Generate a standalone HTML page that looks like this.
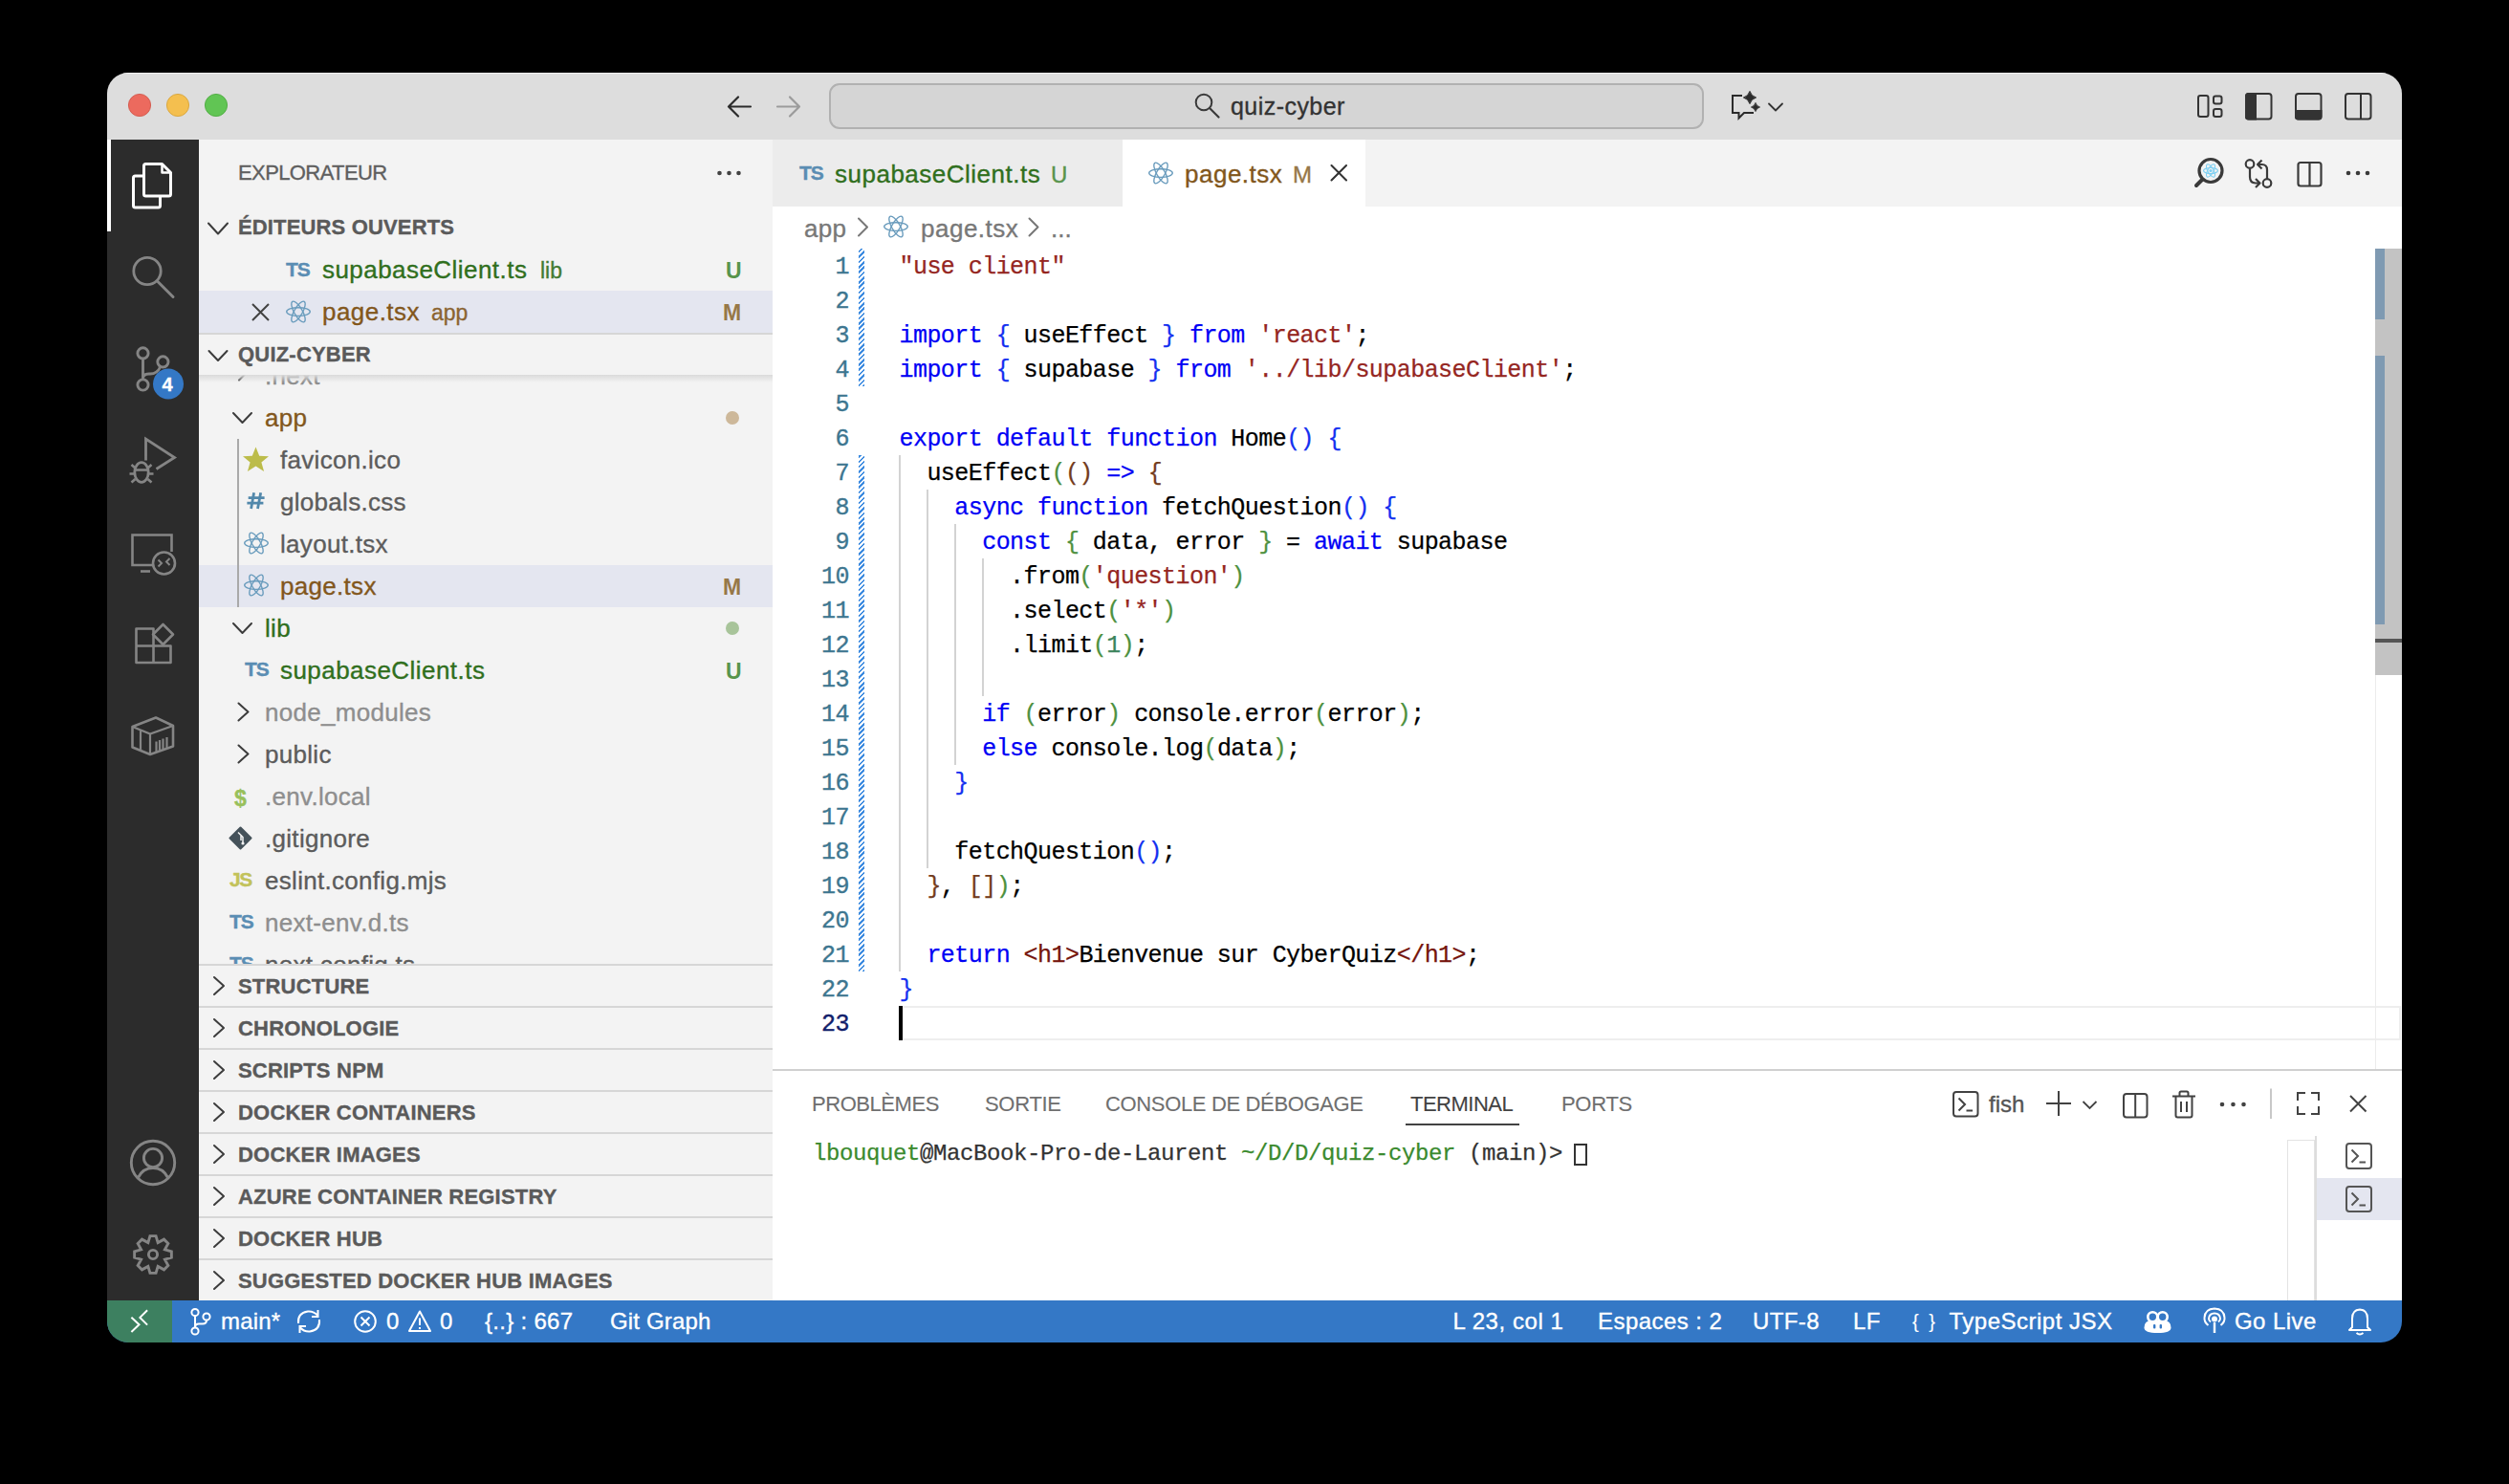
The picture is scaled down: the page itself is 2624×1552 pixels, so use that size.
<!DOCTYPE html>
<html><head><meta charset="utf-8"><style>
html,body{margin:0;padding:0;background:#000;width:2624px;height:1552px;overflow:hidden}
#win{position:absolute;left:0;top:0;width:2624px;height:1552px;clip-path:inset(76px 112px 148px 112px round 22px);}
#win div,#win svg{position:absolute;}
#win div{-webkit-text-stroke:0.35px currentColor;}
#win span{-webkit-text-stroke:0.25px currentColor;}
</style></head><body><div id="win">
<div style="left:112px;top:76px;width:2400px;height:70px;background:#dddddd;"></div>
<div style="left:112px;top:76px;width:2400px;height:1px;background:#f2f2f2;"></div>
<svg style="left:132px;top:96px;" width="28" height="28" viewBox="132 96 28 28" fill="none"><circle cx="146" cy="110" r="11.6" fill="#ec6a5e" stroke="#d1584c" stroke-width="0.9"/></svg>
<svg style="left:172px;top:96px;" width="28" height="28" viewBox="172 96 28 28" fill="none"><circle cx="186" cy="110" r="11.6" fill="#f4bf4f" stroke="#d7a43a" stroke-width="0.9"/></svg>
<svg style="left:212px;top:96px;" width="28" height="28" viewBox="212 96 28 28" fill="none"><circle cx="226" cy="110" r="11.6" fill="#61c554" stroke="#4daa40" stroke-width="0.9"/></svg>
<svg style="left:750px;top:92px;" width="96" height="40" viewBox="750 92 96 40" fill="none"><path d="M785 111.5H762.5M772 101.5L762 111.5L772 121.5" stroke="#2b2b2b" stroke-width="2.2" stroke-linecap="round" stroke-linejoin="round"/><path d="M813 111.5H835.5M826 101.5L836 111.5L826 121.5" stroke="#9b9b9b" stroke-width="2.2" stroke-linecap="round" stroke-linejoin="round"/></svg>
<div style="left:867px;top:87px;width:915px;height:48px;background:#d5d5d5;box-sizing:border-box;border:2px solid #b1b1b1;border-radius:11px;"></div>
<svg style="left:1240px;top:92px;" width="44" height="40" viewBox="1240 92 44 40" fill="none"><circle cx="1259" cy="107" r="8.3" stroke="#3a3a3a" stroke-width="2"/><path d="M1265 113L1274.5 122.5" stroke="#3a3a3a" stroke-width="2.2" stroke-linecap="round"/></svg>
<div style="left:1287px;top:86.33px;line-height:50px;font-size:25px;font-family:'Liberation Sans', sans-serif;color:#333333;letter-spacing:0.45px;white-space:pre;">quiz-cyber</div>
<svg style="left:1800px;top:88px;" width="80" height="44" viewBox="1800 88 80 44" fill="none"><path d="M1822 100H1812V118H1818.5V123.5L1824 118H1834" stroke="#2b2b2b" stroke-width="2" stroke-linejoin="miter"/><path d="M1830 95.4Q1831.452 100.548 1836.6 102Q1831.452 103.452 1830 108.6Q1828.548 103.452 1823.4 102Q1828.548 100.548 1830 95.4Z" fill="#2b2b2b" stroke="#2b2b2b" stroke-width="1" stroke-linejoin="round"/><path d="M1836 107.4Q1837.012 110.988 1840.6 112Q1837.012 113.012 1836 116.6Q1834.988 113.012 1831.4 112Q1834.988 110.988 1836 107.4Z" fill="#2b2b2b" stroke="#2b2b2b" stroke-width="0.8" stroke-linejoin="round"/><path d="M1850 108.5L1857 115.5L1864 108.5" stroke="#333" stroke-width="1.8" stroke-linecap="round" stroke-linejoin="round"/></svg>
<svg style="left:2290px;top:90px;" width="200" height="44" viewBox="2290 90 200 44" fill="none"><rect x="2299" y="100" width="10.5" height="22" rx="2.2" stroke="#333" stroke-width="2"/><rect x="2315" y="100.5" width="8.5" height="8" rx="2.2" stroke="#333" stroke-width="2"/><rect x="2315" y="114" width="8.5" height="8" rx="2.2" stroke="#333" stroke-width="2"/><rect x="2349" y="98" width="26.5" height="26.5" rx="2.8" stroke="#333" stroke-width="2"/><path d="M2348 100.5Q2348 97 2351.5 97H2360V125.5H2351.5Q2348 125.5 2348 122Z" fill="#333"/><rect x="2401" y="98" width="26.5" height="26.5" rx="2.8" stroke="#333" stroke-width="2"/><path d="M2400 115H2428.5V122Q2428.5 125.5 2425 125.5H2403.5Q2400 125.5 2400 122Z" fill="#333"/><rect x="2453" y="98" width="26.5" height="26.5" rx="2.8" stroke="#333" stroke-width="2"/><path d="M2469 98V124.5" stroke="#333" stroke-width="2"/></svg>
<div style="left:112px;top:146px;width:96px;height:1214px;background:#2c2c2c;"></div>
<div style="left:112px;top:146px;width:4px;height:96px;background:#ffffff;"></div>
<svg style="left:130px;top:160px;" width="60" height="70" viewBox="130 160 60 70" fill="none"><path d="M152.5 171.5H169.5L178.5 180.5V203Q178.5 205 176.5 205H152.5Q150.5 205 150.5 203V173.5Q150.5 171.5 152.5 171.5Z" stroke="#fff" stroke-width="3" stroke-linejoin="round"/><path d="M169.5 171.5V180.5H178.5" stroke="#fff" stroke-width="2.5" stroke-linejoin="round"/><path d="M150.5 184H141.5Q139.5 184 139.5 186V215Q139.5 217 141.5 217H165.5Q167.5 217 167.5 215V205" stroke="#fff" stroke-width="3" stroke-linejoin="round"/></svg>
<svg style="left:130px;top:255px;" width="60" height="70" viewBox="130 255 60 70" fill="none"><circle cx="154" cy="283.5" r="14.2" stroke="#858585" stroke-width="2.8"/><path d="M164.5 294L181 310.5" stroke="#858585" stroke-width="3" stroke-linecap="round"/></svg>
<svg style="left:130px;top:350px;" width="70" height="70" viewBox="130 350 70 70" fill="none"><circle cx="149.5" cy="369.4" r="5.6" stroke="#858585" stroke-width="2.9"/><circle cx="170.4" cy="378.4" r="5.6" stroke="#858585" stroke-width="2.9"/><circle cx="149.5" cy="402.5" r="5.6" stroke="#858585" stroke-width="2.9"/><path d="M149.5 375V397M167.5 384Q164.5 391 157 391H155.5Q149.5 391 149.5 396" stroke="#858585" stroke-width="2.9"/><circle cx="176" cy="401.5" r="16" fill="#3478c6"/></svg>
<div style="left:169.5px;top:382.07px;line-height:40px;font-size:20px;font-family:'Liberation Sans', sans-serif;color:#ffffff;font-weight:bold;white-space:pre;">4</div>
<svg style="left:128px;top:450px;" width="64" height="64" viewBox="128 450 64 64" fill="none"><path d="M152.5 481.5V459L182.5 478.5L163.5 490.5" stroke="#858585" stroke-width="2.8" stroke-linejoin="miter"/><ellipse cx="148" cy="494" rx="7.2" ry="10.3" stroke="#858585" stroke-width="2.8"/><path d="M141.5 491.5H154.5M137.5 486L141.5 489.5M158.5 486L154.5 489.5M135.5 495.5H140.5M155.5 495.5H160.5M137.5 504.5L141.5 501M158.5 504.5L154.5 501" stroke="#858585" stroke-width="2.6"/></svg>
<svg style="left:128px;top:550px;" width="64" height="64" viewBox="128 550 64 64" fill="none"><path d="M160 591H138.5V559.5H179.5V577" stroke="#858585" stroke-width="2.6"/><path d="M147 597.5H157" stroke="#858585" stroke-width="2.6"/><circle cx="171.5" cy="589" r="11.5" stroke="#858585" stroke-width="2.6"/><path d="M165.5 585.5L169 589L165.5 592.5M177.5 584L174 587.5L177.5 591" stroke="#858585" stroke-width="2"/></svg>
<svg style="left:128px;top:645px;" width="64" height="60" viewBox="128 645 64 60" fill="none"><path d="M142.5 657.5H160.5V693H142.5ZM142.5 675.5H178.5V693H160.5M160.5 675.5V693" stroke="#858585" stroke-width="2.6" stroke-linejoin="round"/><path d="M170.5 653L181 663.5L170.5 674L160 663.5Z" stroke="#858585" stroke-width="2.6" stroke-linejoin="round"/></svg>
<svg style="left:128px;top:740px;" width="64" height="60" viewBox="128 740 64 60" fill="none"><path d="M138.5 760L163 750.5L181 759V780.5L157 789L138.5 781.5Z" stroke="#858585" stroke-width="2.6" stroke-linejoin="round"/><path d="M138.5 760L157 767.5L181 759M157 767.5V789M147 764V785M163.5 775.5V786M167 774V785M170.5 772.5V783.5M174.5 771V782" stroke="#858585" stroke-width="2.2"/></svg>
<svg style="left:130px;top:1185px;" width="60" height="62" viewBox="130 1185 60 62" fill="none"><circle cx="160" cy="1216" r="22.7" stroke="#858585" stroke-width="2.9"/><circle cx="160" cy="1211" r="9.6" stroke="#858585" stroke-width="2.9"/><path d="M144.5 1231.5Q149.5 1221.5 160 1221.5Q170.5 1221.5 175.5 1231.5" stroke="#858585" stroke-width="2.9"/></svg>
<svg style="left:130px;top:1282px;" width="60" height="60" viewBox="130 1282 60 60" fill="none"><path d="M156.93 1292.64L163.07 1292.64L165.13 1299.62L171.52 1296.14L175.86 1300.48L172.38 1306.87L179.36 1308.93L179.36 1315.07L172.38 1317.13L175.86 1323.52L171.52 1327.86L165.13 1324.38L163.07 1331.36L156.93 1331.36L154.87 1324.38L148.48 1327.86L144.14 1323.52L147.62 1317.13L140.64 1315.07L140.64 1308.93L147.62 1306.87L144.14 1300.48L148.48 1296.14L154.87 1299.62Z" stroke="#858585" stroke-width="2.9" stroke-linejoin="miter"/><circle cx="160" cy="1312" r="4.6" stroke="#858585" stroke-width="2.9"/></svg>
<div style="left:208px;top:146px;width:600px;height:1214px;background:#f3f3f3;"></div>
<div style="left:249px;top:159.37px;line-height:44px;font-size:22px;font-family:'Liberation Sans', sans-serif;color:#5f5f5f;letter-spacing:-0.6px;white-space:pre;">EXPLORATEUR</div>
<svg style="left:745px;top:170px;" width="36" height="22" viewBox="745 170 36 22" fill="none"><circle cx="752.5" cy="181" r="2.3" fill="#424242"/><circle cx="762.5" cy="181" r="2.3" fill="#424242"/><circle cx="772.5" cy="181" r="2.3" fill="#424242"/></svg>
<svg style="left:212px;top:225px;" width="32" height="28" viewBox="212 225 32 28" fill="none"><path d="M218 233.5L228.0 244.5L238 233.5" stroke="#3c3c3c" stroke-width="2" stroke-linecap="round" stroke-linejoin="round"/></svg>
<div style="left:249px;top:216.37px;line-height:44px;font-size:22px;font-family:'Liberation Sans', sans-serif;color:#5a5a5a;font-weight:bold;letter-spacing:0.15px;white-space:pre;">ÉDITEURS OUVERTS</div>
<div style="left:299px;top:260.72px;line-height:42px;font-size:21px;font-family:'Liberation Sans', sans-serif;color:#5a8db3;font-weight:bold;letter-spacing:-1.2px;white-space:pre;">TS</div>
<div style="left:337px;top:255.69px;line-height:52px;font-size:26px;font-family:'Liberation Sans', sans-serif;color:#306f1d;letter-spacing:0.45px;white-space:pre;">supabaseClient.ts</div>
<div style="left:565px;top:259.73px;line-height:46px;font-size:23px;font-family:'Liberation Sans', sans-serif;color:#306f1d;white-space:pre;opacity:0.9">lib</div>
<div style="left:759px;top:260.23px;line-height:46px;font-size:23px;font-family:'Liberation Sans', sans-serif;color:#58944c;font-weight:bold;white-space:pre;-webkit-text-stroke:0px;">U</div>
<div style="left:208px;top:304px;width:600px;height:44px;background:#e4e6f0;"></div>
<svg style="left:255px;top:316px;" width="34" height="22" viewBox="255 316 34 22" fill="none"><path d="M264 318L281 335M281 318L264 335" stroke="#424242" stroke-width="2"/></svg>
<svg style="left:297px;top:311px;" width="30" height="30" viewBox="297 311 30 30" fill="none"><ellipse cx="312" cy="326" rx="12.3" ry="4.3" transform="rotate(0 312 326)" stroke="#6a9cbd" stroke-width="1.35"/><ellipse cx="312" cy="326" rx="12.3" ry="4.3" transform="rotate(60 312 326)" stroke="#6a9cbd" stroke-width="1.35"/><ellipse cx="312" cy="326" rx="12.3" ry="4.3" transform="rotate(120 312 326)" stroke="#6a9cbd" stroke-width="1.35"/></svg>
<div style="left:337px;top:299.69px;line-height:52px;font-size:26px;font-family:'Liberation Sans', sans-serif;color:#82571c;letter-spacing:0.45px;white-space:pre;">page.tsx</div>
<div style="left:451px;top:303.73px;line-height:46px;font-size:23px;font-family:'Liberation Sans', sans-serif;color:#82571c;white-space:pre;opacity:0.9">app</div>
<div style="left:756px;top:304.03px;line-height:46px;font-size:23px;font-family:'Liberation Sans', sans-serif;color:#977848;font-weight:bold;white-space:pre;-webkit-text-stroke:0px;">M</div>
<div style="left:208px;top:347.5px;width:600px;height:2px;background:#d6d6d6;"></div>
<svg style="left:244px;top:365px;" width="24" height="50" viewBox="244 365 24 50" fill="none"><path d="M250 377.5L260 387.5L250 397.5" stroke="#3c3c3c" stroke-width="2" stroke-linecap="round" stroke-linejoin="round"/></svg>
<div style="left:277px;top:366.69px;line-height:52px;font-size:26px;font-family:'Liberation Sans', sans-serif;color:#8e8e8e;letter-spacing:0.3px;white-space:pre;">.next</div>
<svg style="left:238px;top:425px;" width="30" height="24" viewBox="238 425 30 24" fill="none"><path d="M244 432L253.5 442L263 432" stroke="#3c3c3c" stroke-width="2" stroke-linecap="round" stroke-linejoin="round"/></svg>
<div style="left:277px;top:410.69px;line-height:52px;font-size:26px;font-family:'Liberation Sans', sans-serif;color:#82571c;letter-spacing:0.3px;white-space:pre;">app</div>
<div style="left:759px;top:430px;width:14px;height:14px;background:#cdb89a;border-radius:50%;"></div>
<div style="left:248px;top:459px;width:2px;height:176px;background:#a9a9a9;"></div>
<svg style="left:252px;top:465px;" width="32" height="32" viewBox="252 465 32 32" fill="none"><path d="M267.5 467.5L271.2 476.8L281 477.3L273.4 483.4L276.1 493L267.5 487.6L258.9 493L261.6 483.4L254 477.3L263.8 476.8Z" fill="#bcbc4a"/></svg>
<div style="left:293px;top:454.69px;line-height:52px;font-size:26px;font-family:'Liberation Sans', sans-serif;color:#5c5c5c;letter-spacing:0.3px;white-space:pre;">favicon.ico</div>
<svg style="left:252px;top:510px;" width="30" height="28" viewBox="252 510 30 28" fill="none"><path d="M265.6 515.2L262.6 532M272.7 515.2L269.5 532M259.7 520.6H276.6M258.4 526.2H275.4" stroke="#5288ab" stroke-width="2.8"/></svg>
<div style="left:293px;top:498.69px;line-height:52px;font-size:26px;font-family:'Liberation Sans', sans-serif;color:#5c5c5c;letter-spacing:0.3px;white-space:pre;">globals.css</div>
<svg style="left:252.5px;top:553px;" width="30" height="30" viewBox="252.5 553 30 30" fill="none"><ellipse cx="267.5" cy="568" rx="12.3" ry="4.3" transform="rotate(0 267.5 568)" stroke="#6a9cbd" stroke-width="1.35"/><ellipse cx="267.5" cy="568" rx="12.3" ry="4.3" transform="rotate(60 267.5 568)" stroke="#6a9cbd" stroke-width="1.35"/><ellipse cx="267.5" cy="568" rx="12.3" ry="4.3" transform="rotate(120 267.5 568)" stroke="#6a9cbd" stroke-width="1.35"/></svg>
<div style="left:293px;top:542.69px;line-height:52px;font-size:26px;font-family:'Liberation Sans', sans-serif;color:#5c5c5c;letter-spacing:0.3px;white-space:pre;">layout.tsx</div>
<div style="left:250px;top:591px;width:558px;height:44px;background:#e4e6f0;"></div>
<div style="left:208px;top:591px;width:40px;height:44px;background:#e4e6f0;"></div>
<svg style="left:252.5px;top:597px;" width="30" height="30" viewBox="252.5 597 30 30" fill="none"><ellipse cx="267.5" cy="612" rx="12.3" ry="4.3" transform="rotate(0 267.5 612)" stroke="#6a9cbd" stroke-width="1.35"/><ellipse cx="267.5" cy="612" rx="12.3" ry="4.3" transform="rotate(60 267.5 612)" stroke="#6a9cbd" stroke-width="1.35"/><ellipse cx="267.5" cy="612" rx="12.3" ry="4.3" transform="rotate(120 267.5 612)" stroke="#6a9cbd" stroke-width="1.35"/></svg>
<div style="left:293px;top:586.69px;line-height:52px;font-size:26px;font-family:'Liberation Sans', sans-serif;color:#82571c;letter-spacing:0.3px;white-space:pre;">page.tsx</div>
<div style="left:756px;top:591.03px;line-height:46px;font-size:23px;font-family:'Liberation Sans', sans-serif;color:#977848;font-weight:bold;white-space:pre;-webkit-text-stroke:0px;">M</div>
<svg style="left:238px;top:645px;" width="30" height="24" viewBox="238 645 30 24" fill="none"><path d="M244 652L253.5 662L263 652" stroke="#3c3c3c" stroke-width="2" stroke-linecap="round" stroke-linejoin="round"/></svg>
<div style="left:277px;top:630.69px;line-height:52px;font-size:26px;font-family:'Liberation Sans', sans-serif;color:#306f1d;letter-spacing:0.3px;white-space:pre;">lib</div>
<div style="left:759px;top:650px;width:14px;height:14px;background:#a8c49a;border-radius:50%;"></div>
<div style="left:256px;top:678.72px;line-height:42px;font-size:21px;font-family:'Liberation Sans', sans-serif;color:#5a8db3;font-weight:bold;letter-spacing:-1.2px;white-space:pre;">TS</div>
<div style="left:293px;top:674.69px;line-height:52px;font-size:26px;font-family:'Liberation Sans', sans-serif;color:#306f1d;letter-spacing:0.45px;white-space:pre;">supabaseClient.ts</div>
<div style="left:759px;top:679.23px;line-height:46px;font-size:23px;font-family:'Liberation Sans', sans-serif;color:#58944c;font-weight:bold;white-space:pre;-webkit-text-stroke:0px;">U</div>
<svg style="left:244px;top:728px;" width="24" height="34" viewBox="244 728 24 34" fill="none"><path d="M249.5 735.5L259.5 744.5L249.5 753.5" stroke="#3c3c3c" stroke-width="2" stroke-linecap="round" stroke-linejoin="round"/></svg>
<div style="left:277px;top:718.69px;line-height:52px;font-size:26px;font-family:'Liberation Sans', sans-serif;color:#8e8e8e;letter-spacing:0.3px;white-space:pre;">node_modules</div>
<svg style="left:244px;top:772px;" width="24" height="34" viewBox="244 772 24 34" fill="none"><path d="M249.5 779.5L259.5 788.5L249.5 797.5" stroke="#3c3c3c" stroke-width="2" stroke-linecap="round" stroke-linejoin="round"/></svg>
<div style="left:277px;top:762.69px;line-height:52px;font-size:26px;font-family:'Liberation Sans', sans-serif;color:#5c5c5c;letter-spacing:0.3px;white-space:pre;">public</div>
<div style="left:245px;top:811.73px;line-height:46px;font-size:23px;font-family:'Liberation Sans', sans-serif;color:#98c05b;font-weight:bold;white-space:pre;">$</div>
<div style="left:277px;top:806.69px;line-height:52px;font-size:26px;font-family:'Liberation Sans', sans-serif;color:#8e8e8e;letter-spacing:0.3px;white-space:pre;">.env.local</div>
<svg style="left:236px;top:860px;" width="34" height="34" viewBox="236 860 34 34" fill="none"><path d="M251.5 865.5L262.5 876.5L251.5 887.5L240.5 876.5Z" fill="#45525a" stroke="#45525a" stroke-width="2" stroke-linejoin="round"/><path d="M249 870.5L254 875.5V882M252 873V879" stroke="#f3f3f3" stroke-width="1.5"/><circle cx="254" cy="882" r="1.6" fill="#f3f3f3"/></svg>
<div style="left:277px;top:850.69px;line-height:52px;font-size:26px;font-family:'Liberation Sans', sans-serif;color:#5c5c5c;letter-spacing:0.3px;white-space:pre;">.gitignore</div>
<div style="left:240px;top:899.42px;line-height:42px;font-size:21px;font-family:'Liberation Sans', sans-serif;color:#c2c25a;font-weight:bold;letter-spacing:-1.4px;white-space:pre;">JS</div>
<div style="left:277px;top:894.69px;line-height:52px;font-size:26px;font-family:'Liberation Sans', sans-serif;color:#5c5c5c;letter-spacing:0.3px;white-space:pre;">eslint.config.mjs</div>
<div style="left:240px;top:942.72px;line-height:42px;font-size:21px;font-family:'Liberation Sans', sans-serif;color:#5a8db3;font-weight:bold;letter-spacing:-1.2px;white-space:pre;">TS</div>
<div style="left:277px;top:938.69px;line-height:52px;font-size:26px;font-family:'Liberation Sans', sans-serif;color:#8e8e8e;letter-spacing:0.3px;white-space:pre;">next-env.d.ts</div>
<div style="left:240px;top:986.72px;line-height:42px;font-size:21px;font-family:'Liberation Sans', sans-serif;color:#5a8db3;font-weight:bold;letter-spacing:-1.2px;white-space:pre;">TS</div>
<div style="left:277px;top:982.69px;line-height:52px;font-size:26px;font-family:'Liberation Sans', sans-serif;color:#5c5c5c;letter-spacing:0.3px;white-space:pre;">next.config.ts</div>
<div style="left:208px;top:350px;width:600px;height:42px;background:#f3f3f3;"></div>
<svg style="left:212px;top:360px;" width="32" height="24" viewBox="212 360 32 24" fill="none"><path d="M218.5 367L228.0 377L237.5 367" stroke="#3c3c3c" stroke-width="2" stroke-linecap="round" stroke-linejoin="round"/></svg>
<div style="left:249px;top:349.37px;line-height:44px;font-size:22px;font-family:'Liberation Sans', sans-serif;color:#5a5a5a;font-weight:bold;letter-spacing:0.2px;white-space:pre;">QUIZ-CYBER</div>
<div style="left:208px;top:392px;width:600px;height:8px;background:linear-gradient(#dadada,rgba(243,243,243,0));"></div>
<div style="left:208px;top:1009px;width:600px;height:351px;background:#f3f3f3;"></div>
<div style="left:208px;top:1008px;width:600px;height:2px;background:#d6d6d6;"></div>
<svg style="left:215px;top:1015px;" width="28" height="34" viewBox="215 1015 28 34" fill="none"><path d="M224 1022L234 1031.0L224 1040" stroke="#3c3c3c" stroke-width="2" stroke-linecap="round" stroke-linejoin="round"/></svg>
<div style="left:249px;top:1009.87px;line-height:44px;font-size:22px;font-family:'Liberation Sans', sans-serif;color:#5a5a5a;font-weight:bold;letter-spacing:0.2px;white-space:pre;">STRUCTURE</div>
<div style="left:208px;top:1052px;width:600px;height:2px;background:#d6d6d6;"></div>
<svg style="left:215px;top:1059px;" width="28" height="34" viewBox="215 1059 28 34" fill="none"><path d="M224 1066L234 1075.0L224 1084" stroke="#3c3c3c" stroke-width="2" stroke-linecap="round" stroke-linejoin="round"/></svg>
<div style="left:249px;top:1053.87px;line-height:44px;font-size:22px;font-family:'Liberation Sans', sans-serif;color:#5a5a5a;font-weight:bold;letter-spacing:0.2px;white-space:pre;">CHRONOLOGIE</div>
<div style="left:208px;top:1096px;width:600px;height:2px;background:#d6d6d6;"></div>
<svg style="left:215px;top:1103px;" width="28" height="34" viewBox="215 1103 28 34" fill="none"><path d="M224 1110L234 1119.0L224 1128" stroke="#3c3c3c" stroke-width="2" stroke-linecap="round" stroke-linejoin="round"/></svg>
<div style="left:249px;top:1097.87px;line-height:44px;font-size:22px;font-family:'Liberation Sans', sans-serif;color:#5a5a5a;font-weight:bold;letter-spacing:0.2px;white-space:pre;">SCRIPTS NPM</div>
<div style="left:208px;top:1140px;width:600px;height:2px;background:#d6d6d6;"></div>
<svg style="left:215px;top:1147px;" width="28" height="34" viewBox="215 1147 28 34" fill="none"><path d="M224 1154L234 1163.0L224 1172" stroke="#3c3c3c" stroke-width="2" stroke-linecap="round" stroke-linejoin="round"/></svg>
<div style="left:249px;top:1141.87px;line-height:44px;font-size:22px;font-family:'Liberation Sans', sans-serif;color:#5a5a5a;font-weight:bold;letter-spacing:0.2px;white-space:pre;">DOCKER CONTAINERS</div>
<div style="left:208px;top:1184px;width:600px;height:2px;background:#d6d6d6;"></div>
<svg style="left:215px;top:1191px;" width="28" height="34" viewBox="215 1191 28 34" fill="none"><path d="M224 1198L234 1207.0L224 1216" stroke="#3c3c3c" stroke-width="2" stroke-linecap="round" stroke-linejoin="round"/></svg>
<div style="left:249px;top:1185.87px;line-height:44px;font-size:22px;font-family:'Liberation Sans', sans-serif;color:#5a5a5a;font-weight:bold;letter-spacing:0.2px;white-space:pre;">DOCKER IMAGES</div>
<div style="left:208px;top:1228px;width:600px;height:2px;background:#d6d6d6;"></div>
<svg style="left:215px;top:1235px;" width="28" height="34" viewBox="215 1235 28 34" fill="none"><path d="M224 1242L234 1251.0L224 1260" stroke="#3c3c3c" stroke-width="2" stroke-linecap="round" stroke-linejoin="round"/></svg>
<div style="left:249px;top:1229.87px;line-height:44px;font-size:22px;font-family:'Liberation Sans', sans-serif;color:#5a5a5a;font-weight:bold;letter-spacing:0.2px;white-space:pre;">AZURE CONTAINER REGISTRY</div>
<div style="left:208px;top:1272px;width:600px;height:2px;background:#d6d6d6;"></div>
<svg style="left:215px;top:1279px;" width="28" height="34" viewBox="215 1279 28 34" fill="none"><path d="M224 1286L234 1295.0L224 1304" stroke="#3c3c3c" stroke-width="2" stroke-linecap="round" stroke-linejoin="round"/></svg>
<div style="left:249px;top:1273.87px;line-height:44px;font-size:22px;font-family:'Liberation Sans', sans-serif;color:#5a5a5a;font-weight:bold;letter-spacing:0.2px;white-space:pre;">DOCKER HUB</div>
<div style="left:208px;top:1316px;width:600px;height:2px;background:#d6d6d6;"></div>
<svg style="left:215px;top:1323px;" width="28" height="34" viewBox="215 1323 28 34" fill="none"><path d="M224 1330L234 1339.0L224 1348" stroke="#3c3c3c" stroke-width="2" stroke-linecap="round" stroke-linejoin="round"/></svg>
<div style="left:249px;top:1317.87px;line-height:44px;font-size:22px;font-family:'Liberation Sans', sans-serif;color:#5a5a5a;font-weight:bold;letter-spacing:0.2px;white-space:pre;">SUGGESTED DOCKER HUB IMAGES</div>
<div style="left:808px;top:146px;width:1704px;height:70px;background:#f3f3f3;"></div>
<div style="left:808px;top:146px;width:366px;height:70px;background:#ececec;"></div>
<div style="left:1174px;top:146px;width:254px;height:70px;background:#ffffff;"></div>
<div style="left:808px;top:216px;width:1704px;height:902px;background:#ffffff;"></div>
<div style="left:836px;top:160.22px;line-height:42px;font-size:21px;font-family:'Liberation Sans', sans-serif;color:#5a8db3;font-weight:bold;letter-spacing:-1.2px;white-space:pre;">TS</div>
<div style="left:873px;top:155.99px;line-height:52px;font-size:26px;font-family:'Liberation Sans', sans-serif;color:#306f1d;letter-spacing:0.5px;white-space:pre;">supabaseClient.ts</div>
<div style="left:1099px;top:158.68px;line-height:48px;font-size:24px;font-family:'Liberation Sans', sans-serif;color:#58944c;white-space:pre;">U</div>
<svg style="left:1198.5px;top:166px;" width="30" height="30" viewBox="1198.5 166 30 30" fill="none"><ellipse cx="1213.5" cy="181" rx="12.3" ry="4.3" transform="rotate(0 1213.5 181)" stroke="#6a9cbd" stroke-width="1.35"/><ellipse cx="1213.5" cy="181" rx="12.3" ry="4.3" transform="rotate(60 1213.5 181)" stroke="#6a9cbd" stroke-width="1.35"/><ellipse cx="1213.5" cy="181" rx="12.3" ry="4.3" transform="rotate(120 1213.5 181)" stroke="#6a9cbd" stroke-width="1.35"/></svg>
<div style="left:1239px;top:155.99px;line-height:52px;font-size:26px;font-family:'Liberation Sans', sans-serif;color:#82571c;letter-spacing:0.5px;white-space:pre;">page.tsx</div>
<div style="left:1352px;top:158.68px;line-height:48px;font-size:24px;font-family:'Liberation Sans', sans-serif;color:#977848;white-space:pre;">M</div>
<svg style="left:1385px;top:166px;" width="30" height="30" viewBox="1385 166 30 30" fill="none"><path d="M1392.5 173L1408 188.5M1408 173L1392.5 188.5" stroke="#333" stroke-width="2.1" stroke-linecap="round"/></svg>
<svg style="left:2285px;top:160px;" width="230" height="45" viewBox="2285 160 230 45" fill="none"><circle cx="2312" cy="178.5" r="12" stroke="#3a3a3a" stroke-width="3.2"/><path d="M2303.5 187.5L2297 194" stroke="#3a3a3a" stroke-width="4" stroke-linecap="round"/><ellipse cx="2312" cy="178.5" rx="7.5" ry="3" transform="rotate(0 2312 178.5)" stroke="#7fd0f2" stroke-width="1.1"/><ellipse cx="2312" cy="178.5" rx="7.5" ry="3" transform="rotate(60 2312 178.5)" stroke="#7fd0f2" stroke-width="1.1"/><ellipse cx="2312" cy="178.5" rx="7.5" ry="3" transform="rotate(120 2312 178.5)" stroke="#7fd0f2" stroke-width="1.1"/><circle cx="2312" cy="178.5" r="1.6" fill="#7fd0f2"/><circle cx="2353" cy="171.5" r="4.3" stroke="#3a3a3a" stroke-width="2.2"/><circle cx="2371" cy="191.5" r="4.3" stroke="#3a3a3a" stroke-width="2.2"/><path d="M2353 176.5V185Q2353 191.5 2359 191.5H2363M2359 187L2363.5 191.5L2359 196" stroke="#3a3a3a" stroke-width="2.2" stroke-linejoin="round"/><path d="M2371 187V177.5Q2371 172 2365.5 172H2361.5M2365.5 167.5L2361 172L2365.5 176.5" stroke="#3a3a3a" stroke-width="2.2" stroke-linejoin="round"/><rect x="2403.5" y="170" width="24" height="24.5" rx="2.5" stroke="#3a3a3a" stroke-width="2.2"/><path d="M2415.5 170V194.5" stroke="#3a3a3a" stroke-width="2.2"/><circle cx="2456" cy="181" r="2.3" fill="#3a3a3a"/><circle cx="2466" cy="181" r="2.3" fill="#3a3a3a"/><circle cx="2476" cy="181" r="2.3" fill="#3a3a3a"/></svg>
<div style="left:841px;top:212.99px;line-height:52px;font-size:26px;font-family:'Liberation Sans', sans-serif;color:#787878;letter-spacing:0.3px;white-space:pre;">app</div>
<svg style="left:892px;top:222px;" width="24" height="32" viewBox="892 222 24 32" fill="none"><path d="M898 228.5L907 237.5L898 246.5" stroke="#777777" stroke-width="2" stroke-linecap="round" stroke-linejoin="round"/></svg>
<svg style="left:922px;top:222px;" width="30" height="30" viewBox="922 222 30 30" fill="none"><ellipse cx="937" cy="237" rx="12.3" ry="4.3" transform="rotate(0 937 237)" stroke="#6a9cbd" stroke-width="1.35"/><ellipse cx="937" cy="237" rx="12.3" ry="4.3" transform="rotate(60 937 237)" stroke="#6a9cbd" stroke-width="1.35"/><ellipse cx="937" cy="237" rx="12.3" ry="4.3" transform="rotate(120 937 237)" stroke="#6a9cbd" stroke-width="1.35"/></svg>
<div style="left:963px;top:212.99px;line-height:52px;font-size:26px;font-family:'Liberation Sans', sans-serif;color:#787878;letter-spacing:0.5px;white-space:pre;">page.tsx</div>
<svg style="left:1070px;top:222px;" width="24" height="32" viewBox="1070 222 24 32" fill="none"><path d="M1076.5 228.5L1085.5 237.5L1076.5 246.5" stroke="#777777" stroke-width="2" stroke-linecap="round" stroke-linejoin="round"/></svg>
<div style="left:1099px;top:212.99px;line-height:52px;font-size:26px;font-family:'Liberation Sans', sans-serif;color:#787878;white-space:pre;">...</div>
<div style="left:943px;top:1052px;width:1568px;height:36px;background:transparent;box-sizing:border-box;border-top:2px solid #eeeeee;border-bottom:2px solid #eeeeee;border-right:2px solid #eeeeee;"></div>
<div style="left:940px;top:476px;width:2px;height:540px;background:#d3d3d3;"></div>
<div style="left:969px;top:512px;width:2px;height:396px;background:#d3d3d3;"></div>
<div style="left:998px;top:548px;width:2px;height:252px;background:#d3d3d3;"></div>
<div style="left:1027px;top:584px;width:2px;height:144px;background:#d3d3d3;"></div>
<div style="left:940.5px;top:254.65px;line-height:50px;font-size:25px;font-family:'Liberation Mono', monospace;color:#000000;letter-spacing:-0.5525000000000002px;white-space:pre;"><span style="color:#95261f">&quot;use client&quot;</span></div>
<div style="left:940.5px;top:326.65px;line-height:50px;font-size:25px;font-family:'Liberation Mono', monospace;color:#000000;letter-spacing:-0.5525000000000002px;white-space:pre;"><span style="color:#0000f5">import</span><span style="color:#000000"> </span><span style="color:#1330f0">{</span><span style="color:#000000"> useEffect </span><span style="color:#1330f0">}</span><span style="color:#000000"> </span><span style="color:#0000f5">from</span><span style="color:#000000"> </span><span style="color:#95261f">&#x27;react&#x27;</span><span style="color:#000000">;</span></div>
<div style="left:940.5px;top:362.65px;line-height:50px;font-size:25px;font-family:'Liberation Mono', monospace;color:#000000;letter-spacing:-0.5525000000000002px;white-space:pre;"><span style="color:#0000f5">import</span><span style="color:#000000"> </span><span style="color:#1330f0">{</span><span style="color:#000000"> supabase </span><span style="color:#1330f0">}</span><span style="color:#000000"> </span><span style="color:#0000f5">from</span><span style="color:#000000"> </span><span style="color:#95261f">&#x27;../lib/supabaseClient&#x27;</span><span style="color:#000000">;</span></div>
<div style="left:940.5px;top:434.65px;line-height:50px;font-size:25px;font-family:'Liberation Mono', monospace;color:#000000;letter-spacing:-0.5525000000000002px;white-space:pre;"><span style="color:#0000f5">export</span><span style="color:#000000"> </span><span style="color:#0000f5">default</span><span style="color:#000000"> </span><span style="color:#0000f5">function</span><span style="color:#000000"> Home</span><span style="color:#1330f0">()</span><span style="color:#000000"> </span><span style="color:#1330f0">{</span></div>
<div style="left:940.5px;top:470.65px;line-height:50px;font-size:25px;font-family:'Liberation Mono', monospace;color:#000000;letter-spacing:-0.5525000000000002px;white-space:pre;"><span style="color:#000000">  useEffect</span><span style="color:#4e913f">(</span><span style="color:#733c1d">()</span><span style="color:#000000"> </span><span style="color:#0000f5">=&gt;</span><span style="color:#000000"> </span><span style="color:#733c1d">{</span></div>
<div style="left:940.5px;top:506.65px;line-height:50px;font-size:25px;font-family:'Liberation Mono', monospace;color:#000000;letter-spacing:-0.5525000000000002px;white-space:pre;"><span style="color:#000000">    </span><span style="color:#0000f5">async</span><span style="color:#000000"> </span><span style="color:#0000f5">function</span><span style="color:#000000"> fetchQuestion</span><span style="color:#1330f0">()</span><span style="color:#000000"> </span><span style="color:#1330f0">{</span></div>
<div style="left:940.5px;top:542.65px;line-height:50px;font-size:25px;font-family:'Liberation Mono', monospace;color:#000000;letter-spacing:-0.5525000000000002px;white-space:pre;"><span style="color:#000000">      </span><span style="color:#0000f5">const</span><span style="color:#000000"> </span><span style="color:#4e913f">{</span><span style="color:#000000"> data, error </span><span style="color:#4e913f">}</span><span style="color:#000000"> = </span><span style="color:#0000f5">await</span><span style="color:#000000"> supabase</span></div>
<div style="left:940.5px;top:578.65px;line-height:50px;font-size:25px;font-family:'Liberation Mono', monospace;color:#000000;letter-spacing:-0.5525000000000002px;white-space:pre;"><span style="color:#000000">        .from</span><span style="color:#4e913f">(</span><span style="color:#95261f">&#x27;question&#x27;</span><span style="color:#4e913f">)</span></div>
<div style="left:940.5px;top:614.65px;line-height:50px;font-size:25px;font-family:'Liberation Mono', monospace;color:#000000;letter-spacing:-0.5525000000000002px;white-space:pre;"><span style="color:#000000">        .select</span><span style="color:#4e913f">(</span><span style="color:#95261f">&#x27;*&#x27;</span><span style="color:#4e913f">)</span></div>
<div style="left:940.5px;top:650.65px;line-height:50px;font-size:25px;font-family:'Liberation Mono', monospace;color:#000000;letter-spacing:-0.5525000000000002px;white-space:pre;"><span style="color:#000000">        .limit</span><span style="color:#4e913f">(</span><span style="color:#3c845c">1</span><span style="color:#4e913f">)</span><span style="color:#000000">;</span></div>
<div style="left:940.5px;top:722.65px;line-height:50px;font-size:25px;font-family:'Liberation Mono', monospace;color:#000000;letter-spacing:-0.5525000000000002px;white-space:pre;"><span style="color:#000000">      </span><span style="color:#0000f5">if</span><span style="color:#000000"> </span><span style="color:#4e913f">(</span><span style="color:#000000">error</span><span style="color:#4e913f">)</span><span style="color:#000000"> console.error</span><span style="color:#4e913f">(</span><span style="color:#000000">error</span><span style="color:#4e913f">)</span><span style="color:#000000">;</span></div>
<div style="left:940.5px;top:758.65px;line-height:50px;font-size:25px;font-family:'Liberation Mono', monospace;color:#000000;letter-spacing:-0.5525000000000002px;white-space:pre;"><span style="color:#000000">      </span><span style="color:#0000f5">else</span><span style="color:#000000"> console.log</span><span style="color:#4e913f">(</span><span style="color:#000000">data</span><span style="color:#4e913f">)</span><span style="color:#000000">;</span></div>
<div style="left:940.5px;top:794.65px;line-height:50px;font-size:25px;font-family:'Liberation Mono', monospace;color:#000000;letter-spacing:-0.5525000000000002px;white-space:pre;"><span style="color:#000000">    </span><span style="color:#1330f0">}</span></div>
<div style="left:940.5px;top:866.65px;line-height:50px;font-size:25px;font-family:'Liberation Mono', monospace;color:#000000;letter-spacing:-0.5525000000000002px;white-space:pre;"><span style="color:#000000">    fetchQuestion</span><span style="color:#1330f0">()</span><span style="color:#000000">;</span></div>
<div style="left:940.5px;top:902.65px;line-height:50px;font-size:25px;font-family:'Liberation Mono', monospace;color:#000000;letter-spacing:-0.5525000000000002px;white-space:pre;"><span style="color:#000000">  </span><span style="color:#733c1d">}</span><span style="color:#000000">, </span><span style="color:#733c1d">[]</span><span style="color:#4e913f">)</span><span style="color:#000000">;</span></div>
<div style="left:940.5px;top:974.65px;line-height:50px;font-size:25px;font-family:'Liberation Mono', monospace;color:#000000;letter-spacing:-0.5525000000000002px;white-space:pre;"><span style="color:#000000">  </span><span style="color:#0000f5">return</span><span style="color:#000000"> </span><span style="color:#75140c">&lt;h1&gt;</span><span style="color:#000000">Bienvenue sur CyberQuiz</span><span style="color:#75140c">&lt;/h1&gt;</span><span style="color:#000000">;</span></div>
<div style="left:940.5px;top:1010.65px;line-height:50px;font-size:25px;font-family:'Liberation Mono', monospace;color:#000000;letter-spacing:-0.5525000000000002px;white-space:pre;"><span style="color:#1330f0">}</span></div>
<div style="left:800px;width:88px;text-align:right;top:243.65px;line-height:72px;font-size:25px;font-family:'Liberation Mono', monospace;color:#3d7690;letter-spacing:-0.5525000000000002px;">1</div>
<div style="left:800px;width:88px;text-align:right;top:279.65px;line-height:72px;font-size:25px;font-family:'Liberation Mono', monospace;color:#3d7690;letter-spacing:-0.5525000000000002px;">2</div>
<div style="left:800px;width:88px;text-align:right;top:315.65px;line-height:72px;font-size:25px;font-family:'Liberation Mono', monospace;color:#3d7690;letter-spacing:-0.5525000000000002px;">3</div>
<div style="left:800px;width:88px;text-align:right;top:351.65px;line-height:72px;font-size:25px;font-family:'Liberation Mono', monospace;color:#3d7690;letter-spacing:-0.5525000000000002px;">4</div>
<div style="left:800px;width:88px;text-align:right;top:387.65px;line-height:72px;font-size:25px;font-family:'Liberation Mono', monospace;color:#3d7690;letter-spacing:-0.5525000000000002px;">5</div>
<div style="left:800px;width:88px;text-align:right;top:423.65px;line-height:72px;font-size:25px;font-family:'Liberation Mono', monospace;color:#3d7690;letter-spacing:-0.5525000000000002px;">6</div>
<div style="left:800px;width:88px;text-align:right;top:459.65px;line-height:72px;font-size:25px;font-family:'Liberation Mono', monospace;color:#3d7690;letter-spacing:-0.5525000000000002px;">7</div>
<div style="left:800px;width:88px;text-align:right;top:495.65px;line-height:72px;font-size:25px;font-family:'Liberation Mono', monospace;color:#3d7690;letter-spacing:-0.5525000000000002px;">8</div>
<div style="left:800px;width:88px;text-align:right;top:531.65px;line-height:72px;font-size:25px;font-family:'Liberation Mono', monospace;color:#3d7690;letter-spacing:-0.5525000000000002px;">9</div>
<div style="left:800px;width:88px;text-align:right;top:567.65px;line-height:72px;font-size:25px;font-family:'Liberation Mono', monospace;color:#3d7690;letter-spacing:-0.5525000000000002px;">10</div>
<div style="left:800px;width:88px;text-align:right;top:603.65px;line-height:72px;font-size:25px;font-family:'Liberation Mono', monospace;color:#3d7690;letter-spacing:-0.5525000000000002px;">11</div>
<div style="left:800px;width:88px;text-align:right;top:639.65px;line-height:72px;font-size:25px;font-family:'Liberation Mono', monospace;color:#3d7690;letter-spacing:-0.5525000000000002px;">12</div>
<div style="left:800px;width:88px;text-align:right;top:675.65px;line-height:72px;font-size:25px;font-family:'Liberation Mono', monospace;color:#3d7690;letter-spacing:-0.5525000000000002px;">13</div>
<div style="left:800px;width:88px;text-align:right;top:711.65px;line-height:72px;font-size:25px;font-family:'Liberation Mono', monospace;color:#3d7690;letter-spacing:-0.5525000000000002px;">14</div>
<div style="left:800px;width:88px;text-align:right;top:747.65px;line-height:72px;font-size:25px;font-family:'Liberation Mono', monospace;color:#3d7690;letter-spacing:-0.5525000000000002px;">15</div>
<div style="left:800px;width:88px;text-align:right;top:783.65px;line-height:72px;font-size:25px;font-family:'Liberation Mono', monospace;color:#3d7690;letter-spacing:-0.5525000000000002px;">16</div>
<div style="left:800px;width:88px;text-align:right;top:819.65px;line-height:72px;font-size:25px;font-family:'Liberation Mono', monospace;color:#3d7690;letter-spacing:-0.5525000000000002px;">17</div>
<div style="left:800px;width:88px;text-align:right;top:855.65px;line-height:72px;font-size:25px;font-family:'Liberation Mono', monospace;color:#3d7690;letter-spacing:-0.5525000000000002px;">18</div>
<div style="left:800px;width:88px;text-align:right;top:891.65px;line-height:72px;font-size:25px;font-family:'Liberation Mono', monospace;color:#3d7690;letter-spacing:-0.5525000000000002px;">19</div>
<div style="left:800px;width:88px;text-align:right;top:927.65px;line-height:72px;font-size:25px;font-family:'Liberation Mono', monospace;color:#3d7690;letter-spacing:-0.5525000000000002px;">20</div>
<div style="left:800px;width:88px;text-align:right;top:963.65px;line-height:72px;font-size:25px;font-family:'Liberation Mono', monospace;color:#3d7690;letter-spacing:-0.5525000000000002px;">21</div>
<div style="left:800px;width:88px;text-align:right;top:999.65px;line-height:72px;font-size:25px;font-family:'Liberation Mono', monospace;color:#3d7690;letter-spacing:-0.5525000000000002px;">22</div>
<div style="left:800px;width:88px;text-align:right;top:1035.65px;line-height:72px;font-size:25px;font-family:'Liberation Mono', monospace;color:#11206b;letter-spacing:-0.5525000000000002px;">23</div>
<div style="left:898px;top:260px;width:6px;height:144px;background:#fff;background:repeating-linear-gradient(-45deg,#3d8be0 0px,#3d8be0 1.8px,#ffffff 1.8px,#ffffff 3.8px);"></div>
<div style="left:898px;top:476px;width:6px;height:540px;background:#fff;background:repeating-linear-gradient(-45deg,#3d8be0 0px,#3d8be0 1.8px,#ffffff 1.8px,#ffffff 3.8px);"></div>
<div style="left:940px;top:1052px;width:4px;height:36px;background:#000000;"></div>
<div style="left:2484px;top:260px;width:1px;height:858px;background:#ececec;"></div>
<div style="left:2484px;top:260px;width:28px;height:446px;background:#c3c3c3;"></div>
<div style="left:2484px;top:260px;width:10px;height:74px;background:#7f9ab2;"></div>
<div style="left:2484px;top:372px;width:10px;height:281px;background:#7f9ab2;"></div>
<div style="left:2484px;top:668px;width:28px;height:4px;background:#555555;"></div>
<div style="left:808px;top:1118px;width:1704px;height:242px;background:#ffffff;"></div>
<div style="left:808px;top:1118px;width:1704px;height:2px;background:#d0d0d0;"></div>
<div style="left:849px;top:1132.87px;line-height:44px;font-size:22px;font-family:'Liberation Sans', sans-serif;color:#6f6f6f;letter-spacing:-0.45px;white-space:pre;-webkit-text-stroke:0.1px currentColor;">PROBLÈMES</div>
<div style="left:1030px;top:1132.87px;line-height:44px;font-size:22px;font-family:'Liberation Sans', sans-serif;color:#6f6f6f;letter-spacing:-0.3px;white-space:pre;-webkit-text-stroke:0.1px currentColor;">SORTIE</div>
<div style="left:1156px;top:1132.87px;line-height:44px;font-size:22px;font-family:'Liberation Sans', sans-serif;color:#6f6f6f;letter-spacing:-0.35px;white-space:pre;-webkit-text-stroke:0.1px currentColor;">CONSOLE DE DÉBOGAGE</div>
<div style="left:1475px;top:1132.87px;line-height:44px;font-size:22px;font-family:'Liberation Sans', sans-serif;color:#424242;letter-spacing:-0.5px;white-space:pre;-webkit-text-stroke:0.1px currentColor;">TERMINAL</div>
<div style="left:1470px;top:1175px;width:119px;height:2px;background:#424242;"></div>
<div style="left:1633px;top:1132.87px;line-height:44px;font-size:22px;font-family:'Liberation Sans', sans-serif;color:#6f6f6f;letter-spacing:-0.3px;white-space:pre;-webkit-text-stroke:0.1px currentColor;">PORTS</div>
<svg style="left:2030px;top:1130px;" width="480" height="50" viewBox="2030 1130 480 50" fill="none"><rect x="2043" y="1142" width="25.5" height="25.5" rx="3" stroke="#424242" stroke-width="2"/><path d="M2048.5 1148.5L2055 1155L2048.5 1161.5M2056.5 1161.5H2063" stroke="#424242" stroke-width="2"/><path d="M2153 1141V1167M2140 1154H2166" stroke="#424242" stroke-width="2"/><path d="M2178.5 1152L2185.5 1159L2192.5 1152" stroke="#424242" stroke-width="1.8"/><rect x="2221" y="1144" width="24.5" height="24.5" rx="3" stroke="#424242" stroke-width="2"/><path d="M2233.2 1144V1168.5" stroke="#424242" stroke-width="2"/><path d="M2272 1146.5H2296M2279.5 1146V1143Q2279.5 1141.5 2281 1141.5H2287Q2288.5 1141.5 2288.5 1143V1146M2275.5 1147V1166.5Q2275.5 1168.5 2277.5 1168.5H2290.5Q2292.5 1168.5 2292.5 1166.5V1147M2281 1152V1163M2287 1152V1163" stroke="#424242" stroke-width="2"/><circle cx="2324" cy="1155" r="2.3" fill="#424242"/><circle cx="2335.5" cy="1155" r="2.3" fill="#424242"/><circle cx="2346.5" cy="1155" r="2.3" fill="#424242"/><path d="M2375 1138.5V1170" stroke="#c8c8c8" stroke-width="2"/><path d="M2403 1151V1143H2411M2417 1143H2425V1151M2425 1157V1165H2417M2411 1165H2403V1157" stroke="#424242" stroke-width="2"/><path d="M2458 1146L2474.5 1162.5M2474.5 1146L2458 1162.5" stroke="#424242" stroke-width="2"/></svg>
<div style="left:2080px;top:1130.68px;line-height:48px;font-size:24px;font-family:'Liberation Sans', sans-serif;color:#555555;white-space:pre;">fish</div>
<div style="left:850px;top:1183.11px;line-height:48px;font-size:24px;font-family:'Liberation Mono', monospace;color:#333333;letter-spacing:-0.4024000000000001px;white-space:pre;"><span style="color:#3a8a2e">lbouquet</span><span style="color:#333333">@MacBook-Pro-de-Laurent </span><span style="color:#3a8a2e">~/D/D/quiz-cyber</span><span style="color:#333333"> (main)&gt; </span></div>
<div style="left:1646px;top:1196px;width:14px;height:23px;background:transparent;box-sizing:border-box;border:2px solid #333;"></div>
<div style="left:2392px;top:1192px;width:29px;height:168px;background:transparent;box-sizing:border-box;border:1.5px solid #e3e3e3;border-bottom:none;"></div>
<div style="left:2421px;top:1188px;width:2px;height:172px;background:#dddddd;"></div>
<div style="left:2423px;top:1232px;width:89px;height:44px;background:#e4e6f0;"></div>
<svg style="left:2445px;top:1191px;" width="44" height="36" viewBox="2445 1191 44 36" fill="none"><rect x="2454" y="1196" width="26" height="26" rx="3" stroke="#555" stroke-width="2"/><path d="M2459.5 1202.5L2466 1209L2459.5 1215.5M2467.5 1215.5H2474" stroke="#555" stroke-width="2"/></svg>
<svg style="left:2445px;top:1236px;" width="44" height="36" viewBox="2445 1236 44 36" fill="none"><rect x="2454" y="1241" width="26" height="26" rx="3" stroke="#555" stroke-width="2"/><path d="M2459.5 1247.5L2466 1254L2459.5 1260.5M2467.5 1260.5H2474" stroke="#555" stroke-width="2"/></svg>
<div style="left:112px;top:1360px;width:2400px;height:44px;background:#3478c6;"></div>
<div style="left:112px;top:1360px;width:68px;height:44px;background:#3d8060;"></div>
<svg style="left:130px;top:1362px;" width="32" height="40" viewBox="130 1362 32 40" fill="none"><path d="M137.4 1377.7L145.5 1385.3L137.4 1393M154.1 1370.3L146.4 1377.9L154.1 1385.6" stroke="#ffffff" stroke-width="2"/></svg>
<svg style="left:190px;top:1362px;" width="40" height="40" viewBox="190 1362 40 40" fill="none"><circle cx="204" cy="1372.5" r="3.6" stroke="#ffffff" stroke-width="2"/><circle cx="216" cy="1377" r="3.6" stroke="#ffffff" stroke-width="2"/><circle cx="204" cy="1392" r="3.6" stroke="#ffffff" stroke-width="2"/><path d="M204 1376V1388.5M216 1380.5Q216 1384.5 212 1384.5H208Q204 1384.5 204 1388" stroke="#ffffff" stroke-width="2"/></svg>
<div style="left:231px;top:1358.18px;line-height:48px;font-size:24px;font-family:'Liberation Sans', sans-serif;color:#ffffff;letter-spacing:0.2px;white-space:pre;">main*</div>
<svg style="left:305px;top:1364px;" width="36" height="36" viewBox="305 1364 36 36" fill="none"><path d="M312 1384Q311 1373 322 1371.5Q328 1371 332.5 1376M332.5 1370V1377H326M334 1380Q335 1391 324 1392.5Q318 1393 313.5 1388M313.5 1394V1387H320" stroke="#ffffff" stroke-width="2"/></svg>
<svg style="left:365px;top:1364px;" width="95" height="36" viewBox="365 1364 95 36" fill="none"><circle cx="382" cy="1382" r="10.8" stroke="#ffffff" stroke-width="2"/><path d="M377.5 1377.5L386.5 1386.5M386.5 1377.5L377.5 1386.5" stroke="#ffffff" stroke-width="2"/><path d="M439 1371.5L450 1392H428Z" stroke="#ffffff" stroke-width="2" stroke-linejoin="round"/><path d="M439 1378.5V1386M439 1388V1390" stroke="#ffffff" stroke-width="2"/></svg>
<div style="left:404px;top:1358.18px;line-height:48px;font-size:24px;font-family:'Liberation Sans', sans-serif;color:#ffffff;white-space:pre;">0</div>
<div style="left:460px;top:1358.18px;line-height:48px;font-size:24px;font-family:'Liberation Sans', sans-serif;color:#ffffff;white-space:pre;">0</div>
<div style="left:507px;top:1358.18px;line-height:48px;font-size:24px;font-family:'Liberation Sans', sans-serif;color:#ffffff;letter-spacing:0.3px;white-space:pre;">{..} : 667</div>
<div style="left:638px;top:1358.18px;line-height:48px;font-size:24px;font-family:'Liberation Sans', sans-serif;color:#ffffff;letter-spacing:0.15px;white-space:pre;">Git Graph</div>
<div style="left:1519.5px;top:1358.18px;line-height:48px;font-size:24px;font-family:'Liberation Sans', sans-serif;color:#ffffff;letter-spacing:0.55px;white-space:pre;">L 23, col 1</div>
<div style="left:1671px;top:1358.18px;line-height:48px;font-size:24px;font-family:'Liberation Sans', sans-serif;color:#ffffff;letter-spacing:0.45px;white-space:pre;">Espaces : 2</div>
<div style="left:1833px;top:1358.18px;line-height:48px;font-size:24px;font-family:'Liberation Sans', sans-serif;color:#ffffff;letter-spacing:0.4px;white-space:pre;">UTF-8</div>
<div style="left:1938px;top:1358.18px;line-height:48px;font-size:24px;font-family:'Liberation Sans', sans-serif;color:#ffffff;letter-spacing:0.3px;white-space:pre;">LF</div>
<div style="left:2000px;top:1361.57px;line-height:40px;font-size:20px;font-family:'Liberation Sans', sans-serif;color:#ffffff;letter-spacing:2.5px;white-space:pre;-webkit-text-stroke:0.1px currentColor;">{ }</div>
<div style="left:2038.5px;top:1358.18px;line-height:48px;font-size:24px;font-family:'Liberation Sans', sans-serif;color:#ffffff;letter-spacing:0.5px;white-space:pre;">TypeScript JSX</div>
<svg style="left:2236px;top:1364px;" width="40" height="36" viewBox="2236 1364 40 36" fill="none"><path d="M2242.5 1388.5Q2242.5 1381 2250 1381H2263Q2270.5 1381 2270.5 1388.5Q2270.5 1394 2256.5 1394Q2242.5 1394 2242.5 1388.5Z" fill="#ffffff"/><circle cx="2251.3" cy="1377.3" r="5" stroke="#ffffff" stroke-width="2.6"/><circle cx="2261.7" cy="1377.3" r="5" stroke="#ffffff" stroke-width="2.6"/><rect x="2252" y="1385" width="2.4" height="4.5" rx="1" fill="#3478c6"/><rect x="2258.6" y="1385" width="2.4" height="4.5" rx="1" fill="#3478c6"/></svg>
<svg style="left:2300px;top:1364px;" width="34" height="36" viewBox="2300 1364 34 36" fill="none"><circle cx="2316" cy="1379.5" r="3" fill="#ffffff"/><path d="M2316 1383V1394" stroke="#ffffff" stroke-width="2.4"/><path d="M2309.5 1386Q2305 1382.5 2305.5 1378Q2306 1369 2316 1368.5Q2326 1369 2326.5 1378Q2327 1382.5 2322.5 1386" stroke="#ffffff" stroke-width="2"/><path d="M2312 1382.5Q2310 1381 2310 1379Q2310.5 1373.5 2316 1373.5Q2321.5 1373.5 2322 1379Q2322 1381 2320 1382.5" stroke="#ffffff" stroke-width="2"/></svg>
<div style="left:2337px;top:1358.18px;line-height:48px;font-size:24px;font-family:'Liberation Sans', sans-serif;color:#ffffff;letter-spacing:0.45px;white-space:pre;">Go Live</div>
<svg style="left:2450px;top:1364px;" width="36" height="36" viewBox="2450 1364 36 36" fill="none"><path d="M2460 1388V1379Q2460 1370 2468 1369.5Q2476 1370 2476 1379V1388L2479 1391H2457Z" stroke="#ffffff" stroke-width="2" stroke-linejoin="round"/><path d="M2464.5 1394Q2468 1397 2471.5 1394" stroke="#ffffff" stroke-width="2"/></svg>
</div></body></html>
